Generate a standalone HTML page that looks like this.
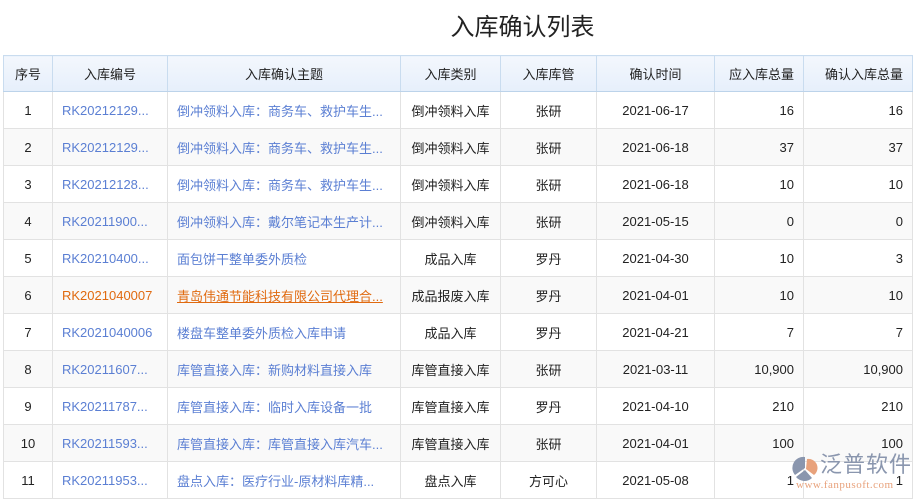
<!DOCTYPE html><html><head><meta charset="utf-8"><style>
body{margin:0;width:922px;height:499px;overflow:hidden;background:#fff;font-family:"Liberation Sans","Noto Sans CJK SC",sans-serif;font-size:13px;color:#222}
h1{margin:0;position:absolute;top:12px;left:0;width:1045px;text-align:center;font-size:24px;font-weight:normal;color:#222;line-height:32px}
table{position:absolute;top:55px;left:3px;border-collapse:collapse;table-layout:fixed}
td,th{border:1px solid #e2e2e2;height:36px;padding:0 9px;white-space:nowrap;overflow:hidden;text-overflow:ellipsis;text-align:center;font-weight:normal}
th{background:linear-gradient(#f3f7fd,#e6effb);border-color:#c9dcef;border-bottom-color:#bcd3ea;height:35px}
tr:nth-child(odd) td{background:#f9f9f9}
.l{text-align:left}.r{text-align:right}.b{color:#5b7fd3}.o{color:#e06a10}.ou{color:#e06a10;text-decoration:underline}
.logo{position:absolute;left:790px;top:452px;width:132px;height:47px}
</style></head><body>
<h1>入库确认列表</h1>
<table>
<colgroup><col style="width:49px"><col style="width:115px"><col style="width:233px"><col style="width:100px"><col style="width:96px"><col style="width:118px"><col style="width:89px"><col style="width:109px"></colgroup>
<tr><th>序号</th><th>入库编号</th><th>入库确认主题</th><th>入库类别</th><th>入库库管</th><th>确认时间</th><th class="r">应入库总量</th><th class="r">确认入库总量</th></tr>
<tr><td>1</td><td class="l b">RK20212129...</td><td class="l b">倒冲领料入库：商务车、救护车生...</td><td>倒冲领料入库</td><td>张研</td><td>2021-06-17</td><td class="r">16</td><td class="r">16</td></tr>
<tr><td>2</td><td class="l b">RK20212129...</td><td class="l b">倒冲领料入库：商务车、救护车生...</td><td>倒冲领料入库</td><td>张研</td><td>2021-06-18</td><td class="r">37</td><td class="r">37</td></tr>
<tr><td>3</td><td class="l b">RK20212128...</td><td class="l b">倒冲领料入库：商务车、救护车生...</td><td>倒冲领料入库</td><td>张研</td><td>2021-06-18</td><td class="r">10</td><td class="r">10</td></tr>
<tr><td>4</td><td class="l b">RK20211900...</td><td class="l b">倒冲领料入库：戴尔笔记本生产计...</td><td>倒冲领料入库</td><td>张研</td><td>2021-05-15</td><td class="r">0</td><td class="r">0</td></tr>
<tr><td>5</td><td class="l b">RK20210400...</td><td class="l b">面包饼干整单委外质检</td><td>成品入库</td><td>罗丹</td><td>2021-04-30</td><td class="r">10</td><td class="r">3</td></tr>
<tr><td>6</td><td class="l o">RK2021040007</td><td class="l ou">青岛伟通节能科技有限公司代理合...</td><td>成品报废入库</td><td>罗丹</td><td>2021-04-01</td><td class="r">10</td><td class="r">10</td></tr>
<tr><td>7</td><td class="l b">RK2021040006</td><td class="l b">楼盘车整单委外质检入库申请</td><td>成品入库</td><td>罗丹</td><td>2021-04-21</td><td class="r">7</td><td class="r">7</td></tr>
<tr><td>8</td><td class="l b">RK20211607...</td><td class="l b">库管直接入库：新购材料直接入库</td><td>库管直接入库</td><td>张研</td><td>2021-03-11</td><td class="r">10,900</td><td class="r">10,900</td></tr>
<tr><td>9</td><td class="l b">RK20211787...</td><td class="l b">库管直接入库：临时入库设备一批</td><td>库管直接入库</td><td>罗丹</td><td>2021-04-10</td><td class="r">210</td><td class="r">210</td></tr>
<tr><td>10</td><td class="l b">RK20211593...</td><td class="l b">库管直接入库：库管直接入库汽车...</td><td>库管直接入库</td><td>张研</td><td>2021-04-01</td><td class="r">100</td><td class="r">100</td></tr>
<tr><td>11</td><td class="l b">RK20211953...</td><td class="l b">盘点入库：医疗行业-原材料库精...</td><td>盘点入库</td><td>方可心</td><td>2021-05-08</td><td class="r">1</td><td class="r">1</td></tr>
</table>
<div class="logo">
<svg width="26" height="26" style="position:absolute;left:2px;top:3px" viewBox="0 0 26 26"><path d="M13 2 A11 11 0 0 0 3 20 L13 13 Z" fill="#8a96ae"/><path d="M15 4 A9 9 0 0 1 22 20 L14 14 Z" fill="#e8a27c"/><path d="M4 22 L13 15 L20 23 A11 11 0 0 1 4 22Z" fill="#8a96ae"/></svg>
<div style="position:absolute;left:30px;top:0;font-size:22px;color:#8a96ae;letter-spacing:1px;line-height:26px">泛普软件</div>
<div style="position:absolute;left:6px;top:27px;font-size:11px;color:#e8a27c;font-family:'Liberation Serif',serif;letter-spacing:0.5px">www.fanpusoft.com</div>
</div>
</body></html>
